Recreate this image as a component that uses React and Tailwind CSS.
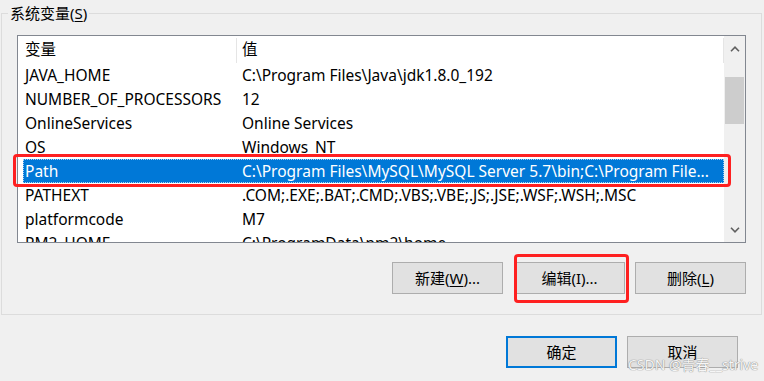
import React from 'react';

const rows = [
  { name: 'JAVA_HOME', value: 'C:\\Program Files\\Java\\jdk1.8.0_192' },
  { name: 'NUMBER_OF_PROCESSORS', value: '12' },
  { name: 'OnlineServices', value: 'Online Services' },
  { name: 'OS', value: 'Windows_NT' },
  { name: 'Path', value: 'C:\\Program Files\\MySQL\\MySQL Server 5.7\\bin;C:\\Program File...', selected: true },
  { name: 'PATHEXT', value: '.COM;.EXE;.BAT;.CMD;.VBS;.VBE;.JS;.JSE;.WSF;.WSH;.MSC' },
  { name: 'platformcode', value: 'M7' },
  { name: 'PM2_HOME', value: 'C:\\ProgramData\\pm2\\home' },
];

const Chevron = ({ up }) => (
  <svg width="10" height="6" viewBox="0 0 10 6">
    <polyline
      points={up ? '1,5.2 5,1.2 9,5.2' : '1,0.8 5,4.8 9,0.8'}
      fill="none"
      stroke="#606060"
      strokeWidth="1.6"
    />
  </svg>
);

const Btn = ({ children, primary }) => (
  <button
    className={
      primary
        ? 'w-[111px] h-[32px] bg-[#e1e1e1] border-2 border-[#0078d7] text-[15px] text-black leading-none'
        : 'w-[111px] h-[32px] bg-[#e1e1e1] border border-[#adadad] text-[15px] text-black leading-none'
    }
  >
    {children}
  </button>
);

export default function App() {
  return (
    <div
      className="relative w-[764px] h-[381px] bg-[#f0f0f0] overflow-hidden text-black"
      style={{ fontFamily: '"Noto Sans", "Noto Sans CJK SC", sans-serif' }}
    >
      <fieldset className="ml-[1px] mt-[3px] w-[761px] border border-[#dcdcdc] p-0">
        <legend className="ml-[6px] px-[2px] text-[15px] leading-[20px]">
          系统变量(<span className="underline underline-offset-2">S</span>)
        </legend>
        <div className="pl-[15px] pt-[12px] pb-[20px]">
          {/* list view */}
          <div className="w-[729px] h-[208px] border border-[#828790] bg-white flex">
            <div className="flex-1 overflow-hidden">
              <div className="flex h-[27px] items-center text-[15.5px] pt-px">
                <div className="w-[218px] pl-[7px]">变量</div>
                <div className="w-px h-[25px] bg-[#e5e5e5]" />
                <div className="flex-1 pl-[5px]">值</div>
                <div className="w-px h-[25px] bg-[#e5e5e5]" />
              </div>
              {rows.map((r) => (
                <div
                  key={r.name}
                  className={
                    r.selected
                      ? 'ml-[5px] pl-[2px] pt-px flex h-[24px] items-center text-[15.5px] whitespace-nowrap bg-[#0078d7] text-white outline-1 outline-dotted -outline-offset-1 outline-[#a8d0f5]'
                      : 'ml-[5px] pl-[2px] pt-px flex h-[24px] items-center text-[15.5px] whitespace-nowrap'
                  }
                >
                  <div className="w-[217px]">{r.name}</div>
                  <div className="flex-1">{r.value}</div>
                </div>
              ))}
            </div>
            {/* scrollbar */}
            <div className="w-[21px] bg-[#f0f0f0] flex flex-col items-center">
              <div className="h-[24px] flex items-center justify-center pt-[2px]">
                <Chevron up />
              </div>
              <div className="mt-[17px] w-[19px] h-[47px] bg-[#cdcdcd]" />
              <div className="flex-1" />
              <div className="h-[24px] flex items-center justify-center">
                <Chevron />
              </div>
            </div>
          </div>
          <div className="mt-[19px] flex justify-end gap-[10px] pr-[15px]">
            <div className="mr-px">
              <Btn>
                新建(<span className="underline underline-offset-2">W</span>)...
              </Btn>
            </div>
            <Btn>编辑(I)...</Btn>
            <Btn>
              删除(<span className="underline underline-offset-2">L</span>)
            </Btn>
          </div>
        </div>
      </fieldset>

      <div className="mt-[21px] flex justify-end gap-[10px] pr-[26px]">
        <Btn primary>确定</Btn>
        <Btn>取消</Btn>
      </div>

      {/* annotations */}
      <div className="absolute left-[13px] top-[154px] w-[718px] h-[33px] border-[3px] border-[#fe2020] rounded-[4px]" />
      <div className="absolute left-[514px] top-[254px] w-[115px] h-[49px] border-[3px] border-[#fe2020] rounded-[4px]" />
      <div className="absolute left-[628px] top-[356px] whitespace-nowrap text-[14px] leading-[18px] text-[#f6f6f6] [text-shadow:0_0_1px_#888,0_0_1px_#888]">
        CSDN @青春__strive
      </div>
    </div>
  );
}
